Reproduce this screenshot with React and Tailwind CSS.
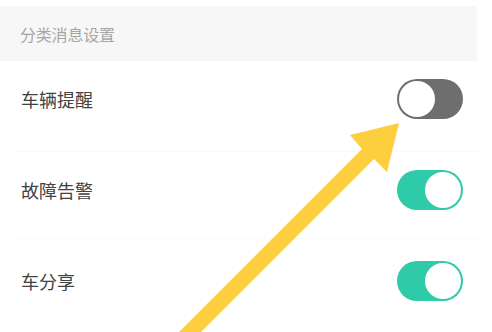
import React from "react";

function Toggle({ on }) {
  return (
    <div
      className={
        "w-[66px] h-[40px] rounded-full p-[2px] flex " +
        (on ? "bg-[#2fcaa7] justify-end" : "bg-[#6e6e6e] justify-start")
      }
    >
      <div className="w-[36px] h-[36px] rounded-full bg-white" />
    </div>
  );
}

function Row({ label, on, h, pt, divider }) {
  return (
    <div className="flex flex-col">
      <div className={"flex items-start justify-between pl-[21px] pr-[14px] " + h + " " + pt}>
        <span className="text-[18px] leading-[40px] text-[#424242]">{label}</span>
        <Toggle on={on} />
      </div>
      {divider && <div className="ml-[16px] h-px bg-[#f8f8f8]" />}
    </div>
  );
}

export default function App() {
  return (
    <div
      className="relative w-[492px] h-[332px] overflow-hidden bg-white"
      style={{ fontFamily: '"Noto Sans CJK SC", "Noto Sans", sans-serif' }}
    >
      <div className="w-[477px] pt-[6px]">
        <div className="h-[55px] bg-[#f7f7f7] flex items-center pl-[20px]">
          <span className="text-[16px] text-[#a6a6a6] tracking-[-0.2px]">分类消息设置</span>
        </div>
        <Row label="车辆提醒" on={false} h="h-[90px]" pt="pt-[18px]" divider />
        <Row label="故障告警" on={true} h="h-[86px]" pt="pt-[18px]" divider />
        <Row label="车分享" on={true} h="h-[93px]" pt="pt-[22px]" />
      </div>
      <svg
        className="absolute inset-0 pointer-events-none"
        width="492"
        height="332"
        viewBox="0 0 492 332"
      >
        <polygon
          fill="#fdcf3e"
          points="399,123 387,172 374,159 188,345 166,345 362,149 350,135"
        />
      </svg>
    </div>
  );
}
